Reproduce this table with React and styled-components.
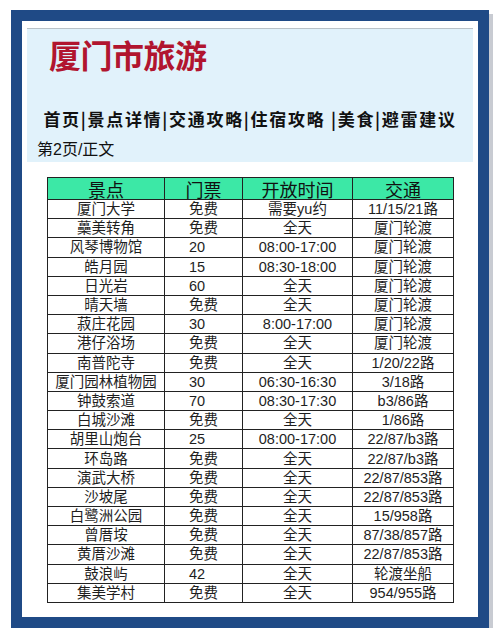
import styled, { createGlobalStyle } from 'styled-components';

const GlobalStyle = createGlobalStyle`
  body {
    margin: 0;
    background: #ffffff;
    font-family: "Liberation Sans", "Noto Sans CJK SC", sans-serif;
  }
`;

const Frame = styled.div`
  box-sizing: border-box;
  width: 478px;
  height: 618px;
  margin: 10px 0 0 11px;
  border: 11px solid #1f4a86;
  background: #ffffff;
  box-shadow: 4px 4px 0 #c8cbd2;
  padding: 7px 5px 0 5px;
  display: flex;
  flex-direction: column;
`;

const Header = styled.div`
  box-sizing: border-box;
  height: 134px;
  background: #e1f2fb;
  border-top: 1px solid #b9c2c8;
  padding: 5px 0 0 0;
  display: flex;
  flex-direction: column;
`;

const Title = styled.h1`
  margin: 0 0 0 22px;
  font-family: "Noto Sans CJK SC", sans-serif;
  font-size: 32px;
  line-height: 40px;
  font-weight: 700;
  color: #b1152f;
  letter-spacing: -0.5px;
`;

const Nav = styled.div`
  margin-top: 33px;
  text-align: center;
  font-family: "Noto Sans CJK SC", sans-serif;
  font-size: 17px;
  line-height: 24px;
  font-weight: 700;
  color: #111111;
  letter-spacing: 1.7px;
  white-space: pre;
`;

const Crumb = styled.div`
  margin: 8px 0 0 10px;
  font-family: "Liberation Sans", "Noto Sans CJK SC", sans-serif;
  font-size: 16px;
  line-height: 22px;
  color: #111111;
`;

const Table = styled.table`
  margin: 15px 0 0 20px;
  width: 406px;
  border-collapse: collapse;
  table-layout: fixed;
  border: 1.5px solid #222222;
  font-family: "Liberation Sans", "Noto Sans CJK SC", sans-serif;
`;

const HeadRow = styled.tr`
  height: 22px;
`;

const Row = styled.tr`
  height: 19.2px;
`;

const Th = styled.th`
  padding: 0;
  background: #3ce8a6;
  border: 1.2px solid #222222;
  font-family: "Noto Sans CJK SC", sans-serif;
  font-size: 18px;
  line-height: 18px;
  font-weight: 400;
  color: #111111;
  text-align: center;
`;

const Td = styled.td`
  padding: 0 0 0 ${(p) => (p.$left ? '24px' : '0')};
  border: 1.2px solid #222222;
  font-size: 14.5px;
  line-height: 14px;
  color: #1e1e1e;
  text-align: ${(p) => (p.$left ? 'left' : 'center')};
  white-space: nowrap;
  overflow: hidden;
`;

const cols = [117, 78, 110, 101];

const rows = [
  ['厦门大学', '免费', '需要yu约', '11/15/21路'],
  ['蘽美转角', '免费', '全天', '厦门轮渡'],
  ['风琴博物馆', '20', '08:00-17:00', '厦门轮渡'],
  ['皓月园', '15', '08:30-18:00', '厦门轮渡'],
  ['日光岩', '60', '全天', '厦门轮渡'],
  ['晴天墙', '免费', '全天', '厦门轮渡'],
  ['菽庄花园', '30', '8:00-17:00', '厦门轮渡'],
  ['港仔浴场', '免费', '全天', '厦门轮渡'],
  ['南普陀寺', '免费', '全天', '1/20/22路'],
  ['厦门园林植物园', '30', '06:30-16:30', '3/18路'],
  ['钟鼓索道', '70', '08:30-17:30', 'b3/86路'],
  ['白城沙滩', '免费', '全天', '1/86路'],
  ['胡里山炮台', '25', '08:00-17:00', '22/87/b3路'],
  ['环岛路', '免费', '全天', '22/87/b3路'],
  ['演武大桥', '免费', '全天', '22/87/853路'],
  ['沙坡尾', '免费', '全天', '22/87/853路'],
  ['白鹭洲公园', '免费', '全天', '15/958路'],
  ['曾厝垵', '免费', '全天', '87/38/857路'],
  ['黄厝沙滩', '免费', '全天', '22/87/853路'],
  ['鼓浪屿', '42', '全天', '轮渡坐船'],
  ['集美学村', '免费', '全天', '954/955路'],
];

const App = () => {
  return (
    <>
      <GlobalStyle />
      <Frame>
        <Header>
          <Title>厦门市旅游</Title>
          <Nav>首页|景点详情|交通攻略|住宿攻略 |美食|避雷建议</Nav>
          <Crumb>第2页/正文</Crumb>
        </Header>
        <Table>
          <colgroup>
            {cols.map((w, i) => (
              <col key={i} style={{ width: w }} />
            ))}
          </colgroup>
          <thead>
            <HeadRow>
              <Th>景点</Th>
              <Th>门票</Th>
              <Th>开放时间</Th>
              <Th>交通</Th>
            </HeadRow>
          </thead>
          <tbody>
            {rows.map((r) => (
              <Row key={r[0]}>
                <Td>{r[0]}</Td>
                <Td $left>{r[1]}</Td>
                <Td>{r[2]}</Td>
                <Td>{r[3]}</Td>
              </Row>
            ))}
          </tbody>
        </Table>
      </Frame>
    </>
  );
};

export default App;
